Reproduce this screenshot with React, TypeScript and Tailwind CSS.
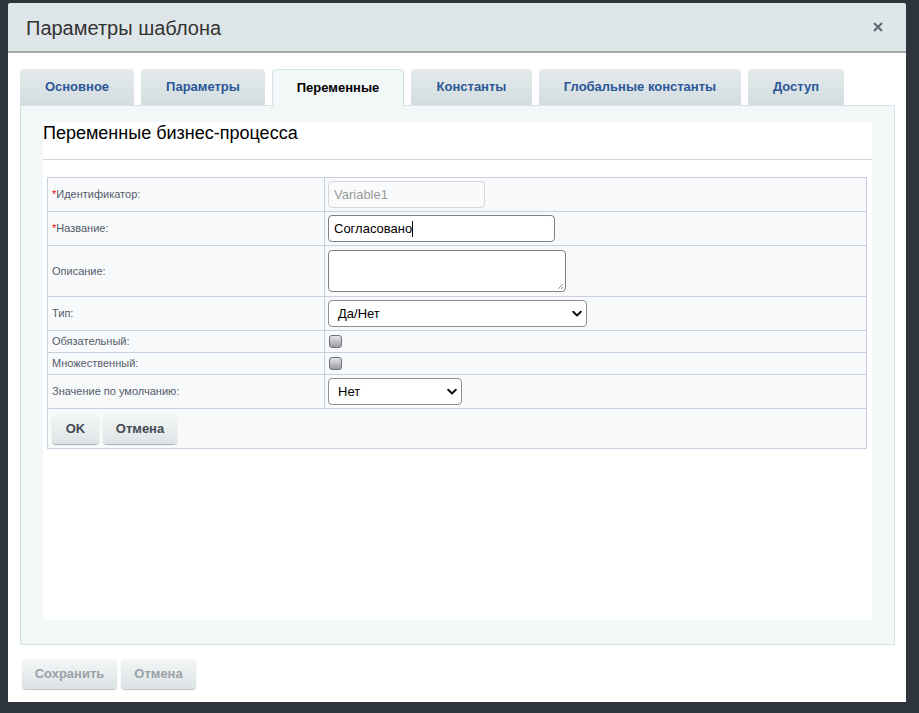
import React from "react";

const tabs = [
  { title: "Основное", w: "w-[114px]" },
  { title: "Параметры", w: "w-[124px]" },
  { title: "Переменные", w: "w-[132px]", active: true },
  { title: "Константы", w: "w-[121px]" },
  { title: "Глобальные константы", w: "w-[202px]" },
  { title: "Доступ", w: "w-[96px]" },
];

const Chevron = () => (
  <svg width="10" height="7" viewBox="0 0 10 7" className="absolute right-[4px] top-1/2 -translate-y-1/2">
    <path d="M1.2 1.3 L5 5 L8.8 1.3" fill="none" stroke="#111" strokeWidth="2" strokeLinecap="round" strokeLinejoin="round" />
  </svg>
);

const Checkbox = () => (
  <span className="block w-[13px] h-[13px] rounded-[3px] border border-[#6f7379] bg-gradient-to-b from-[#e4e5e7] to-[#9a9da2]" />
);

const Label = ({ text, req }: { text: string; req?: boolean }) => (
  <span className="text-[11px] text-[#535c69]">
    {req && <span className="text-[#e00]">*</span>}
    {text}
  </span>
);

export default function App() {
  return (
    <div className="w-[919px] h-[713px] bg-[#2e353c] pt-[3px] pl-[8px] overflow-hidden font-['Liberation_Sans',Arial,sans-serif]">
      <div className="w-[898px] h-[699px] bg-white rounded-t-[3px] flex flex-col">
        {/* header */}
        <div className="h-[50px] bg-[#dfe6e9] border-b-2 border-[#a9a9a9] rounded-t-[3px] flex items-center justify-between pl-[18px] pr-[23px] shrink-0">
          <span className="text-[20px] text-[#333] mt-[1px]">Параметры шаблона</span>
          <svg width="10" height="10" viewBox="0 0 10 10">
            <path d="M1 1 L9 9 M9 1 L1 9" stroke="#5c6470" strokeWidth="2" />
          </svg>
        </div>

        {/* tabs */}
        <div className="pl-[12px] pt-[16px] flex gap-[7px] relative z-10">
          {tabs.map((t) => (
            <div
              key={t.title}
              className={
                t.active
                  ? `${t.w} h-[37px] flex items-center justify-center rounded-t-[4px] bg-[#f2f7f7] border border-b-0 border-[#d5e1e5] text-[13px] font-bold text-black`
                  : `${t.w} h-[36px] flex items-center justify-center rounded-t-[4px] bg-gradient-to-b from-[#e4eaec] to-[#d3dde0] text-[13px] font-bold text-[#2b5797]`
              }
            >
              {t.title}
            </div>
          ))}
        </div>

        {/* panel */}
        <div className="ml-[12px] -mt-[1px] w-[875px] h-[540px] bg-[#f2f7f7] border border-[#d5e1e5] px-[22px] pt-[16px] pb-[24px]">
          <div className="bg-white h-full">
            <div className="h-[38px] border-b border-[#d6d6d6] pt-[1px]">
              <span className="block text-[18px] leading-[20px] text-black">Переменные бизнес-процесса</span>
            </div>

            <div className="pt-[17px] px-[4px] pr-[5px]">
              <div className="border border-[#c9cee0] bg-[#f8f9fb] text-[13px]">
                <div className="grid grid-cols-[277px_1fr]">
                  <div className="h-[34px] px-[4px] flex items-center border-b border-r border-[#c9cee0]">
                    <Label text="Идентификатор:" req />
                  </div>
                  <div className="h-[34px] px-[3px] flex items-center border-b border-[#c9cee0]">
                    <div className="w-[157px] h-[27px] rounded-[4px] border border-[#d8d8d8] bg-[#f9fafb] flex items-center px-[5px] text-[#9a9a9a]">
                      Variable1
                    </div>
                  </div>

                  <div className="h-[34px] px-[4px] flex items-center border-b border-r border-[#c9cee0]">
                    <Label text="Название:" req />
                  </div>
                  <div className="h-[34px] px-[3px] flex items-center border-b border-[#c9cee0]">
                    <div className="w-[227px] h-[27px] rounded-[4px] border border-[#7d8187] bg-white flex items-center px-[5px] text-black">
                      Согласовано<span className="inline-block w-[1px] h-[16px] bg-black" />
                    </div>
                  </div>

                  <div className="h-[51px] px-[4px] flex items-center border-b border-r border-[#c9cee0]">
                    <Label text="Описание:" />
                  </div>
                  <div className="h-[51px] px-[3px] flex items-center border-b border-[#c9cee0]">
                    <div className="relative w-[238px] h-[42px] rounded-[4px] border border-[#7d8187] bg-white">
                      <svg width="7" height="7" viewBox="0 0 7 7" className="absolute right-[1px] bottom-[1px]">
                        <path d="M6 1 L1 6 M6 4 L4 6" stroke="#777" strokeWidth="0.8" />
                      </svg>
                    </div>
                  </div>

                  <div className="h-[34px] px-[4px] flex items-center border-b border-r border-[#c9cee0]">
                    <Label text="Тип:" />
                  </div>
                  <div className="h-[34px] px-[3px] flex items-center border-b border-[#c9cee0]">
                    <div className="relative w-[259px] h-[27px] rounded-[4px] border border-[#8a8e94] bg-white flex items-center px-[9px] text-black">
                      Да/Нет
                      <Chevron />
                    </div>
                  </div>

                  <div className="h-[22px] px-[4px] flex items-center border-b border-r border-[#c9cee0]">
                    <Label text="Обязательный:" />
                  </div>
                  <div className="h-[22px] px-[4px] flex items-center border-b border-[#c9cee0]">
                    <Checkbox />
                  </div>

                  <div className="h-[22px] px-[4px] flex items-center border-b border-r border-[#c9cee0]">
                    <Label text="Множественный:" />
                  </div>
                  <div className="h-[22px] px-[4px] flex items-center border-b border-[#c9cee0]">
                    <Checkbox />
                  </div>

                  <div className="h-[34px] px-[4px] flex items-center border-b border-r border-[#c9cee0]">
                    <Label text="Значение по умолчанию:" />
                  </div>
                  <div className="h-[34px] px-[3px] flex items-center border-b border-[#c9cee0]">
                    <div className="relative w-[134px] h-[27px] rounded-[4px] border border-[#8a8e94] bg-white flex items-center px-[9px] text-black">
                      Нет
                      <Chevron />
                    </div>
                  </div>
                </div>

                <div className="h-[39px] flex items-center gap-[4px] px-[4px]">
                  <div className="w-[47px] h-[30px] rounded-[4px] bg-gradient-to-b from-[#f5f7f7] to-[#dde3e5] shadow-[0_1px_1px_rgba(0,0,0,0.3)] flex items-center justify-center text-[13px] font-bold text-[#434a54]">
                    OK
                  </div>
                  <div className="w-[74px] h-[30px] rounded-[4px] bg-gradient-to-b from-[#f5f7f7] to-[#dde3e5] shadow-[0_1px_1px_rgba(0,0,0,0.3)] flex items-center justify-center text-[13px] font-bold text-[#434a54]">
                    Отмена
                  </div>
                </div>
              </div>
            </div>
          </div>
        </div>

        {/* footer */}
        <div className="pl-[14px] pt-[14px] flex gap-[4px]">
          <div className="w-[95px] h-[30px] rounded-[4px] bg-gradient-to-b from-[#f3f6f6] to-[#dce3e5] shadow-[0_1px_1px_rgba(0,0,0,0.25)] flex items-center justify-center text-[13px] font-bold text-[#9aa1a8]">
            Сохранить
          </div>
          <div className="w-[75px] h-[30px] rounded-[4px] bg-gradient-to-b from-[#f3f6f6] to-[#dce3e5] shadow-[0_1px_1px_rgba(0,0,0,0.25)] flex items-center justify-center text-[13px] font-bold text-[#9aa1a8]">
            Отмена
          </div>
        </div>
      </div>
    </div>
  );
}
